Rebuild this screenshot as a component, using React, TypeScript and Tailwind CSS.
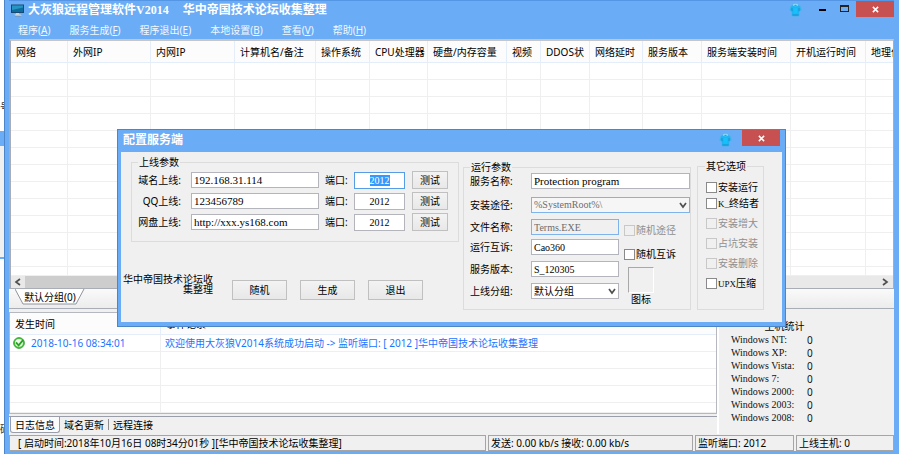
import type { ReactNode } from "react";

const columns: { title: string; width: string }[] = [
  { title: "网络", width: "w-[57px]" },
  { title: "外网IP", width: "w-[83px]" },
  { title: "内网IP", width: "w-[84px]" },
  { title: "计算机名/备注", width: "w-[81px]" },
  { title: "操作系统", width: "w-[54px]" },
  { title: "CPU处理器", width: "w-[58px]" },
  { title: "硬盘/内存容量", width: "w-[79px]" },
  { title: "视频", width: "w-[34px]" },
  { title: "DDOS状", width: "w-[49px]" },
  { title: "网络延时", width: "w-[53px]" },
  { title: "服务版本", width: "w-[59px]" },
  { title: "服务端安装时间", width: "w-[89px]" },
  { title: "开机运行时间", width: "w-[75px]" },
  { title: "地理位置", width: "" },
];

const menus = [
  ["程序", "A"],
  ["服务生成", "F"],
  ["程序退出", "E"],
  ["本地设置", "B"],
  ["查看", "V"],
  ["帮助", "H"],
];

const hostStats = ["NT", "XP", "Vista", "7", "2000", "2003", "2008"];

function Latin({ children }: { children: ReactNode }) {
  return <span className="font-['Liberation_Serif',serif] text-[9px]">{children}</span>;
}

function Monitor() {
  return (
    <svg viewBox="0 0 13 13" className="h-[13px] w-[13px]" aria-hidden="true">
      <rect x="0" y="0.5" width="13" height="8.5" fill="#174a72" />
      <rect x="1" y="1.5" width="11" height="6.5" fill="#0d6d9e" />
      <path d="M1 1.5h11v2L1 6z" fill="#2695c4" />
      <path d="M5 9h3v1.5H5z" fill="#d6d3c8" />
      <path d="M3.5 10.5h6l1 1.5h-6z" fill="#ece7d6" />
      <path d="M4 12h6" stroke="#7a8791" strokeWidth="0.8" />
    </svg>
  );
}

function Shirt() {
  return (
    <svg viewBox="0 0 13 14" className="h-[14px] w-[13px]" aria-hidden="true">
      <path
        d="M4 1.8 1.5 3.2.5 7.5l2 .8v4.4c2.500.8 5.500.8 8 0V8.300l2-.8-1-4.300L9 1.800z"
        fill="#22b4f2"
        stroke="#58b4e4"
        strokeWidth="0.8"
      />
      <ellipse cx="6.5" cy="2" rx="2.6" ry="1.3" fill="#8adcf8" />
      <ellipse cx="6.5" cy="2.3" rx="1.4" ry="0.6" fill="#2a9cd8" />
      <path d="M3 5v3.200M10 5v3.200M3.300 12h6.400" stroke="#1a86c4" strokeWidth="0.8" />
      <path d="M4.800 5h3.500v5.500H4.800z" fill="#18c0fb" />
    </svg>
  );
}

function CloseButton() {
  return (
    <button
      type="button"
      aria-label="关闭"
      className="flex h-4 w-[38px] items-center justify-center bg-[#c75050]"
    >
      <svg viewBox="0 0 8 8" className="h-[7px] w-[7px]" aria-hidden="true">
        <path d="M1 1l6 6M7 1L1 7" stroke="#fff" strokeWidth="1.7" />
      </svg>
    </button>
  );
}

function Chevron({ direction }: { direction: "left" | "right" | "down" }) {
  const paths = { left: "M6 1L2 4l4 3", right: "M2 1l4 3-4 3", down: "M1 2l3 4 3-4" };
  return (
    <svg viewBox="0 0 8 8" className="h-2 w-2" aria-hidden="true">
      <path d={paths[direction]} fill="none" stroke="#505050" strokeWidth="1.7" />
    </svg>
  );
}

function SuccessIcon() {
  return (
    <svg viewBox="0 0 12 12" className="h-3 w-3 shrink-0" aria-hidden="true">
      <circle cx="6" cy="6" r="5.4" fill="#4cc23e" stroke="#2b9a2b" strokeWidth="0.8" />
      <circle cx="6" cy="5.8" r="3.9" fill="#eef9ea" />
      <path d="M3 5.4l2.600 2.900L10.200 2.800" fill="none" stroke="#25a520" strokeWidth="1.8" />
    </svg>
  );
}

const fieldBase =
  "block h-4 border border-[#b4b4bc] bg-white px-[2px] font-['Liberation_Serif',serif] leading-[14px] text-black outline-none";

function Check({ id, label, disabled }: { id: string; label: ReactNode; disabled?: boolean }) {
  return (
    <div className="flex h-3 items-center gap-px whitespace-nowrap">
      <input
        id={id}
        type="checkbox"
        disabled={disabled}
        className="h-[11px] w-[11px] shrink-0 appearance-none border border-[#8a8a8a] bg-white disabled:border-[#c8c8c8] disabled:bg-[#f0f0f0]"
      />
      <label htmlFor={id} className={disabled ? "text-[#8f8f8f]" : "text-black"}>
        {label}
      </label>
    </div>
  );
}

function OnlineRow({ id, label, value, active }: { id: string; label: string; value: string; active?: boolean }) {
  return (
    <div className="flex h-[18px] items-center">
      <label htmlFor={id} className="w-[43px] text-right whitespace-nowrap">
        {label}:
      </label>
      <input id={id} defaultValue={value} className={`${fieldBase} ml-[10px] w-32 text-[11px]`} />
      <label htmlFor={`${id}-port`} className="ml-[6px] w-[29px]">
        端口:
      </label>
      <input
        id={`${id}-port`}
        defaultValue="2012"
        autoFocus={active}
        onFocus={(e) => e.currentTarget.select()}
        className="block h-[17px] w-[51px] border border-[#b4b4bc] bg-white text-center font-['Liberation_Serif',serif] text-[10px] text-black outline-none selection:bg-[#3399ff] selection:text-white focus:border-[#569de5]"
      />
      <button
        type="button"
        className="ml-[7px] h-[18px] w-9 border border-[#c0c0c0] bg-linear-to-b from-[#f3f3f3] to-[#e8e8e8]"
      >
        测试
      </button>
    </div>
  );
}

function Field({ id, label, children }: { id: string; label: string; children: ReactNode }) {
  return (
    <div className="flex h-4 items-center">
      <label htmlFor={id} className="w-[61px] shrink-0">
        {label}:
      </label>
      {children}
    </div>
  );
}

function Dialog() {
  return (
    <section
      role="dialog"
      aria-labelledby="dialog-title"
      className="absolute top-[129px] left-[117px] w-[669px] border border-[#4c86c8] bg-[#6aacf6] px-[3px] pb-1"
    >
      <header className="flex h-[22px] items-start">
        <h2
          id="dialog-title"
          className="ml-[2px] flex-1 text-xs leading-[20px] font-bold text-white"
        >
          配置服务端
        </h2>
        <div className="mt-[3px] mr-[10px]">
          <Shirt />
        </div>
        <div className="mr-[2px]">
          <CloseButton />
        </div>
      </header>

      <div className="flex bg-[#f0f0f0] pr-[18px] pb-3 pl-[10px]">
        <div className="w-[328px] pt-1">
          <fieldset className="h-[86px] min-w-0 border border-[#dcdcdc] pl-[6px]">
            <legend className="h-3 px-px">上线参数</legend>
            <div className="mt-[3px] flex flex-col gap-[3px]">
              <OnlineRow id="domain" label="域名上线" value="192.168.31.114" active />
              <OnlineRow id="qq" label="QQ上线" value="123456789" />
              <OnlineRow id="disk" label="网盘上线" value="http://xxx.ys168.com" />
            </div>
          </fieldset>
          <div className="mt-8 -ml-2 flex items-start">
            <p className="w-[90px] text-right leading-[10px]">华中帝国技术论坛收集整理</p>
            <div className="mt-[6px] ml-[19px] flex gap-[13px]">
              {["随机", "生成", "退出"].map((text) => (
                <button
                  key={text}
                  type="button"
                  className="h-5 w-[55px] border border-[#c0c0c0] bg-linear-to-b from-[#f3f3f3] to-[#e8e8e8]"
                >
                  {text}
                </button>
              ))}
            </div>
          </div>
        </div>

        <fieldset className="mt-[9px] ml-1 h-[149px] w-[228px] min-w-0 border border-[#dcdcdc] pl-[6px]">
          <legend className="h-3 px-px">运行参数</legend>
          <Field id="service" label="服务名称">
            <input
              id="service"
              defaultValue="Protection program"
              className={`${fieldBase} min-w-0 flex-1 text-[11px]`}
            />
          </Field>
          <div className="mt-2">
            <Field id="path" label="安装途径">
              <div className="relative flex-1">
                <select
                  id="path"
                  className="block h-4 w-full appearance-none border border-[#7eb4ea] bg-[#f6f6f6] px-[2px] font-['Liberation_Serif',serif] text-[10px] leading-[14px] text-[#6d6d6d]"
                >
                  <option>%SystemRoot%\</option>
                </select>
                <span className="pointer-events-none absolute top-1 right-[3px]">
                  <Chevron direction="down" />
                </span>
              </div>
            </Field>
          </div>
          <div className="mt-[6px] flex">
            <div className="flex w-[149px] flex-col">
              <Field id="file" label="文件名称">
                <input
                  id="file"
                  disabled
                  defaultValue="Terms.EXE"
                  className="block h-4 w-[88px] border border-[#7eb4ea] bg-[#f0f0f0] px-[2px] font-['Liberation_Serif',serif] text-[10px] text-[#6d6d6d]"
                />
              </Field>
              <div className="mt-1 flex flex-col gap-[6px]">
                <Field id="mutex" label="运行互诉">
                  <input id="mutex" defaultValue="Cao360" className={`${fieldBase} w-[88px] text-[10px]`} />
                </Field>
                <Field id="version" label="服务版本">
                  <input id="version" defaultValue="S_120305" className={`${fieldBase} w-[88px] text-[10px]`} />
                </Field>
                <Field id="group" label="上线分组">
                  <div className="relative w-[88px]">
                    <select
                      id="group"
                      className="block h-4 w-full appearance-none border border-[#b4b4bc] bg-white px-[2px] text-[10px] leading-[14px]"
                    >
                      <option>默认分组</option>
                    </select>
                    <span className="pointer-events-none absolute top-1 right-[3px]">
                      <Chevron direction="down" />
                    </span>
                  </div>
                </Field>
              </div>
            </div>
            <div className="ml-[5px] pt-[5px]">
              <Check id="random-path" label="随机途径" disabled />
              <div className="mt-3">
                <Check id="random-mutex" label="随机互诉" />
              </div>
              <div className="mt-[7px] ml-1 w-[26px] text-center">
                <div className="h-[26px] border border-t-[#a8a8a8] border-r-white border-b-white border-l-[#a8a8a8] bg-[#f0f0f0]" />
                <span className="block whitespace-nowrap">图标</span>
              </div>
            </div>
          </div>
        </fieldset>

        <fieldset className="mt-2 ml-[6px] h-[150px] w-[67px] min-w-0 border border-[#dcdcdc] pl-2">
          <legend className="-ml-px h-3 px-px">其它选项</legend>
          <div className="mt-[9px] flex flex-col gap-2">
            <div className="flex flex-col gap-1">
              <Check id="opt-run" label="安装运行" />
              <Check id="opt-kill" label={<><Latin>K_</Latin>终结者</>} />
            </div>
            <Check id="opt-grow" label="安装增大" disabled />
            <Check id="opt-hold" label="占坑安装" disabled />
            <Check id="opt-del" label="安装删除" disabled />
            <Check id="opt-upx" label={<><Latin>UPX</Latin>压缩</>} />
          </div>
        </fieldset>
      </div>
    </section>
  );
}

function HostTable() {
  return (
    <div className="overflow-hidden border-t-2 border-r border-l-2 border-t-[#c6c6c6] border-r-[#a9adb5] border-l-[#a9adb5] bg-white">
      <table className="w-full table-fixed border-separate border-spacing-0">
        <thead>
          <tr className="h-[22px] bg-[#fcfcfc]">
            {columns.map((c) => (
              <th
                key={c.title}
                className={`${c.width} overflow-hidden border-r border-b border-[#e3eefa] pl-[5px] text-left font-normal whitespace-nowrap last:border-r-0`}
              >
                {c.title}
              </th>
            ))}
          </tr>
        </thead>
        <tbody>
          {Array.from({ length: 13 }, (_, row) => (
            <tr key={row} className="h-[17px] last:h-[9px]">
              {columns.map((c) => (
                <td key={c.title} className="border-r border-b border-[#efefef] p-0 last:border-r-0" />
              ))}
            </tr>
          ))}
        </tbody>
      </table>
      <div className="flex h-[13px] items-center border-b border-[#a9adb5] bg-[#e9e9e9]">
        <button type="button" aria-label="向左滚动" className="flex w-[14px] justify-center">
          <Chevron direction="left" />
        </button>
        <div className="h-full w-3/4 bg-[#cdcdcd]" />
        <button type="button" aria-label="向右滚动" className="mr-1 ml-auto">
          <Chevron direction="right" />
        </button>
      </div>
    </div>
  );
}

function LogPanel() {
  return (
    <div className="flex min-w-0 flex-1 flex-col">
      <div className="border border-[#b5b8bf] bg-white">
        <table className="w-full table-fixed border-separate border-spacing-0">
          <thead>
            <tr className="h-[22px] bg-[#fcfcfc]">
              <th className="w-[151px] border-r border-b border-[#e3eefa] pl-[5px] text-left font-normal">
                发生时间
              </th>
              <th className="border-b border-[#e3eefa] pl-[5px] text-left font-normal">事件记录</th>
            </tr>
          </thead>
          <tbody>
            <tr className="h-[17px] text-[#1a74ff]">
              <td className="border-r border-b border-[#efefef] p-0 pl-[3px]">
                <div className="flex items-center gap-[6px]">
                  <SuccessIcon />
                  2018-10-16 08:34:01
                </div>
              </td>
              <td className="border-b border-[#efefef] p-0 pl-1 whitespace-nowrap">
                欢迎使用大灰狼V2014系统成功启动 -&gt; 监听端口: [ 2012 ]华中帝国技术论坛收集整理
              </td>
            </tr>
            {Array.from({ length: 4 }, (_, row) => (
              <tr key={row} className="h-[17px] last:h-[10px]">
                <td className="border-r border-b border-[#efefef] p-0" />
                <td className="border-b border-[#efefef] p-0" />
              </tr>
            ))}
          </tbody>
        </table>
      </div>
      <div className="mt-[2px] flex h-[18px] items-start border-t border-[#9a9ea8]" role="tablist">
        <button
          type="button"
          role="tab"
          aria-selected="true"
          className="ml-px h-4 rounded-b-[3px] border border-t-0 border-[#9a9ea8] bg-[#fbfbfb] px-1"
        >
          日志信息
        </button>
        <button type="button" role="tab" className="h-4 px-1">
          域名更新
        </button>
        <span className="mt-[2px] h-[11px] w-px bg-[#8d8d8d]" />
        <button type="button" role="tab" className="h-4 px-1">
          远程连接
        </button>
      </div>
    </div>
  );
}

function StatsPanel() {
  return (
    <aside className="w-[177px] border-l-2 border-white bg-[#f0f0f0] pt-2">
      <h3 className="pr-11 text-center leading-[13px]">主机统计</h3>
      <dl className="pl-3 text-[#111]">
        {hostStats.map((name) => (
          <div key={name} className="flex h-[13px] items-center">
            <dt className="w-[76px] font-['Liberation_Serif',serif]">Windows {name}:</dt>
            <dd>0</dd>
          </div>
        ))}
      </dl>
    </aside>
  );
}

export default function App() {
  return (
    <div className="relative flex min-h-screen overflow-hidden bg-white font-['Noto_Sans','Noto_Sans_CJK_SC',sans-serif] text-[10px] leading-3 text-black">
      <div className="flex w-1 shrink-0 flex-col overflow-hidden text-[#333]" aria-hidden="true">
        <span className="mt-[101px] w-3 leading-3">号</span>
        <span className="mt-[18px] h-[15px] bg-[#6aacf6]" />
        <span className="h-[113px] border-b-2 border-[#6aacf6] bg-[#f0f0f0]" />
        <span className="mt-[164px] w-3 leading-3">码</span>
      </div>

      <main className="flex min-w-0 flex-1 flex-col border-l border-[#4c86c8] bg-[#6aacf6] pr-[5px] pb-[3px] pl-1">
        <header className="flex h-5 items-start border-t border-[#5596e4]">
          <div className="mt-[3px] ml-[2px]">
            <Monitor />
          </div>
          <h1 className="ml-1 flex-1 text-xs leading-[18px] font-bold whitespace-pre text-white">
            大灰狼远程管理软件
            <span className="mr-[14px] font-['Liberation_Serif',serif]">V2014</span>
            华中帝国技术论坛收集整理
          </h1>
          <div className="mt-[2px] mr-[17px]">
            <Shirt />
          </div>
          <button type="button" aria-label="最小化" className="mt-2 h-[2px] w-[7px] bg-black" />
          <button
            type="button"
            aria-label="最大化"
            className="mt-1 mr-[7px] ml-[14px] h-[7px] w-[9px] border border-t-2 border-[#222]"
          />
          <CloseButton />
        </header>
        <nav className="flex h-[19px] items-center gap-[19px] pl-[9px] text-[#f2f8ff]">
          {menus.map(([text, key]) => (
            <button key={key} type="button">
              {text}(<u>{key}</u>)
            </button>
          ))}
        </nav>

        <div className="flex flex-1 flex-col bg-[#f0f0f0]">
          <HostTable />
          <div className="h-5 border-b border-[#a9adb5] bg-linear-to-b from-[#fafafa] to-[#ececec] pl-[6px]">
            <button type="button" className="relative block h-4 w-[70px]">
              <svg viewBox="0 0 70 16" className="absolute inset-0 h-4 w-[70px]" aria-hidden="true">
                <path d="M0 0l8 15h53l8-15" fill="#fff" stroke="#8f939b" />
              </svg>
              <span className="relative whitespace-nowrap">默认分组(0)</span>
            </button>
          </div>
          <div className="mt-[3px] flex">
            <LogPanel />
            <StatsPanel />
          </div>
          <footer className="mt-px flex h-4 gap-[2px] leading-[14px] whitespace-nowrap">
            <span className="min-w-0 flex-1 overflow-hidden border border-[#a5a5a5] pl-2">
              [ 启动时间:2018年10月16日 08时34分01秒 ][华中帝国技术论坛收集整理]
            </span>
            <span className="w-[205px] border border-[#a5a5a5] pl-[2px]">发送: 0.00 kb/s 接收: 0.00 kb/s</span>
            <span className="w-[99px] border border-[#a5a5a5] pl-[2px]">监听端口: 2012</span>
            <span className="w-[98px] border border-[#a5a5a5] pl-[2px]">上线主机: 0</span>
          </footer>
        </div>
      </main>
      <Dialog />
    </div>
  );
}
